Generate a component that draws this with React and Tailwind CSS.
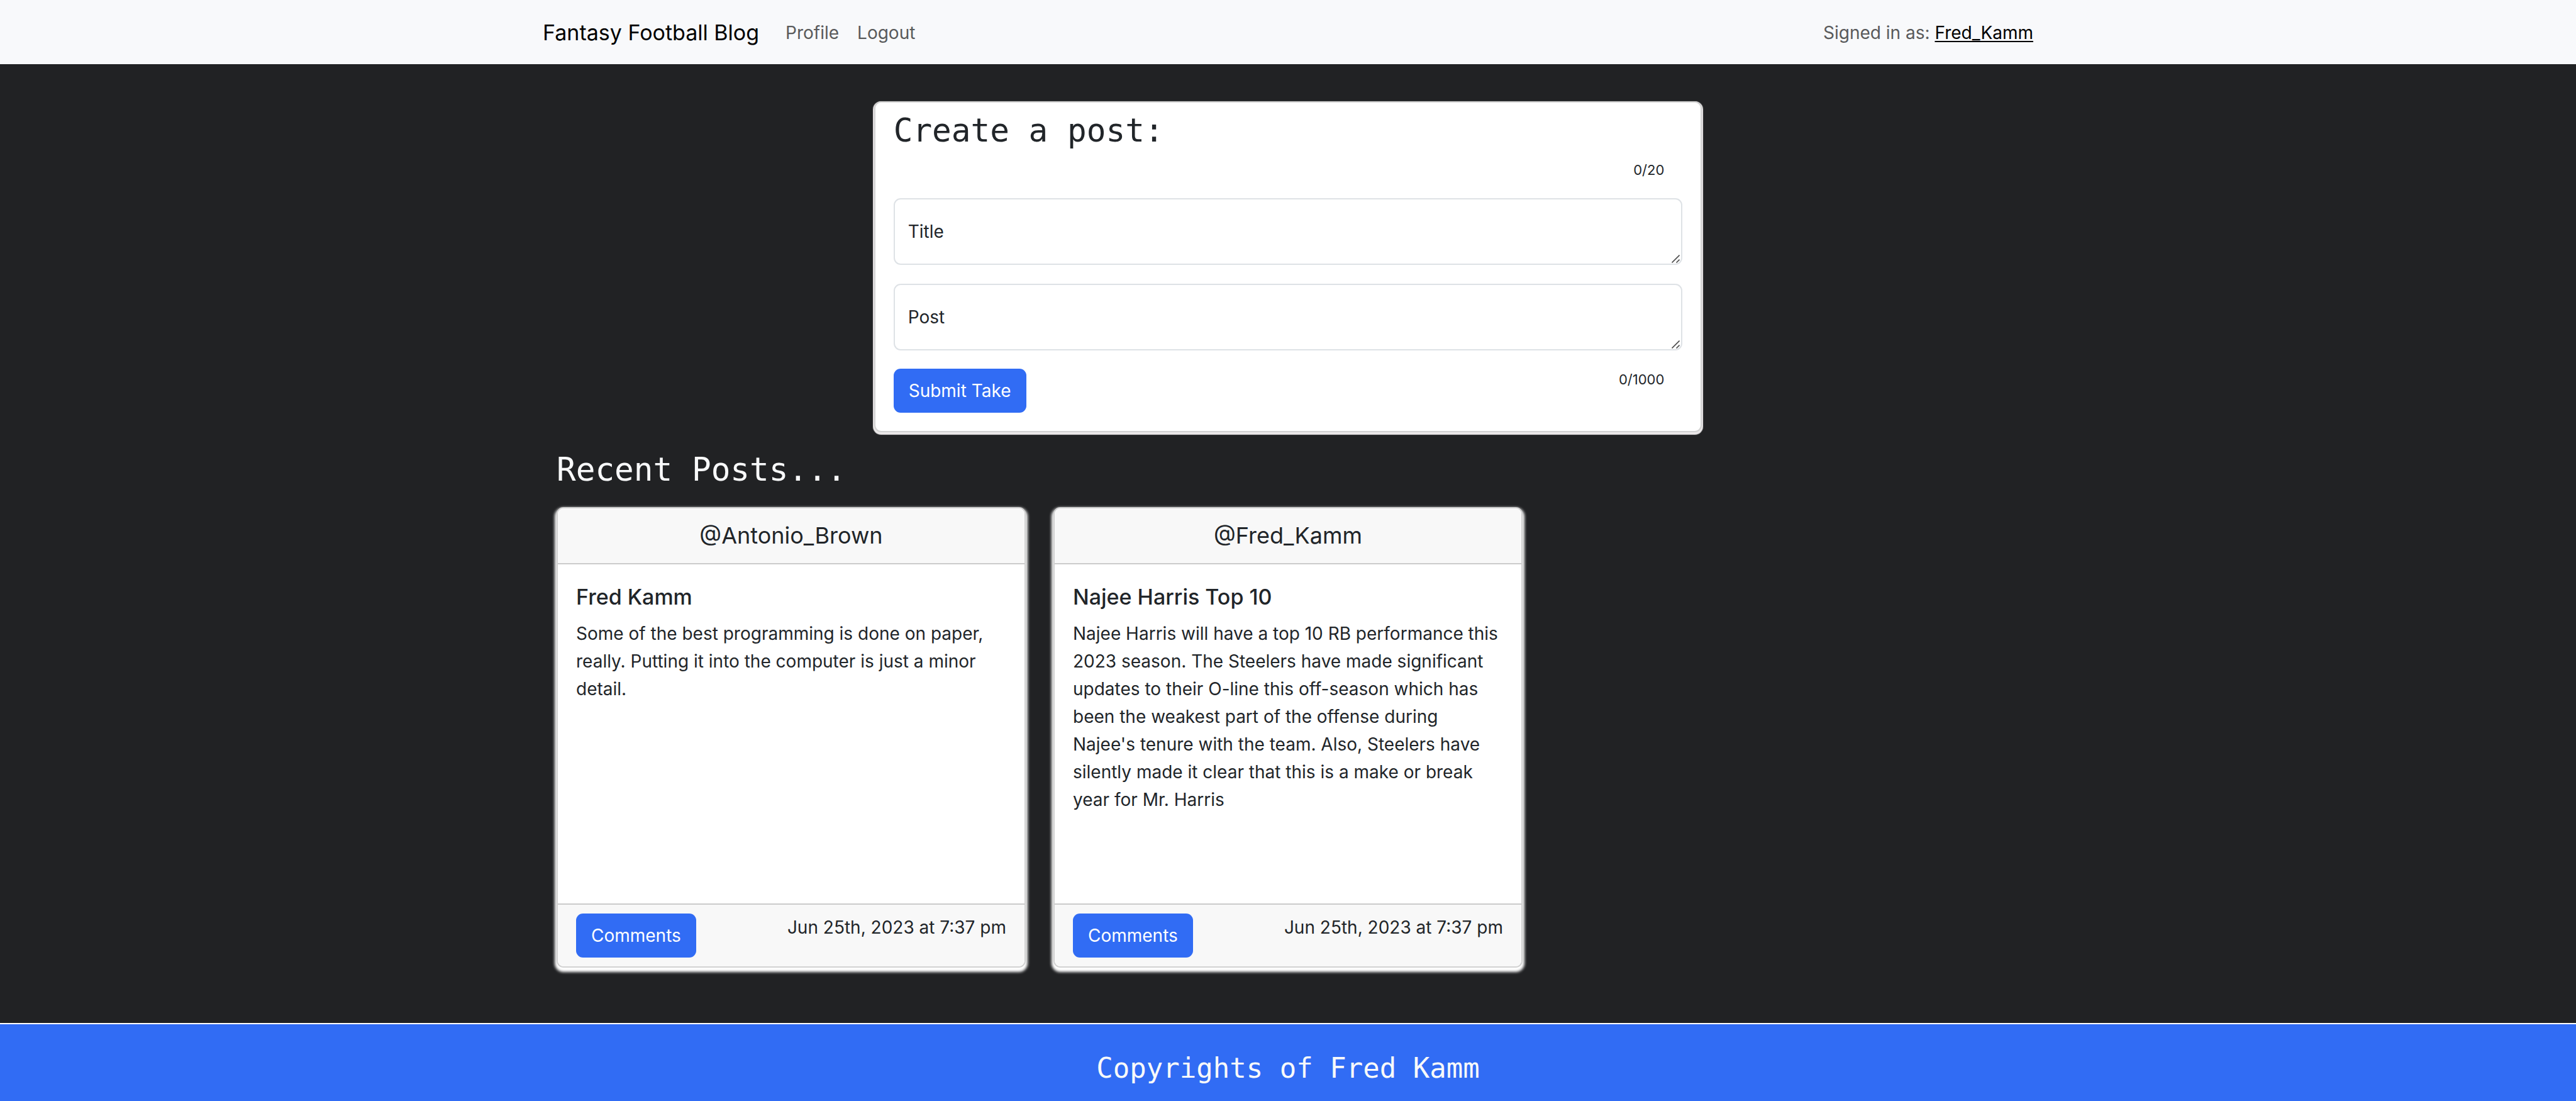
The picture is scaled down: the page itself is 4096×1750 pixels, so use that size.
import React, { useState } from "react";

const posts = [
  {
    user: "@Antonio_Brown",
    title: "Fred Kamm",
    body: "Some of the best programming is done on paper, really. Putting it into the computer is just a minor detail.",
    date: "Jun 25th, 2023 at 7:37 pm",
  },
  {
    user: "@Fred_Kamm",
    title: "Najee Harris Top 10",
    body: "Najee Harris will have a top 10 RB performance this 2023 season. The Steelers have made significant updates to their O-line this off-season which has been the weakest part of the offense during Najee's tenure with the team. Also, Steelers have silently made it clear that this is a make or break year for Mr. Harris",
    date: "Jun 25th, 2023 at 7:37 pm",
  },
];

function Navbar() {
  return (
    <header className="bg-[#f8f9fb]">
      <nav className="mx-auto flex h-[102px] max-w-[2370px] items-center pt-[2px] text-[28px] leading-[44px] text-[#595a5b]">
        <a href="#home" className="text-[34px] leading-[54px] text-black">
          Fantasy Football Blog
        </a>
        <div className="ml-[42px] flex gap-[29px]">
          <a href="#profile">Profile</a>
          <a href="#logout">Logout</a>
        </div>
        <p className="ml-auto">
          Signed in as:{" "}
          <a
            href="#me"
            className="text-black underline decoration-2 underline-offset-[3px] [text-decoration-skip-ink:none]"
          >
            Fred_Kamm
          </a>
        </p>
      </nav>
    </header>
  );
}

function ResizeGrip() {
  return (
    <svg
      viewBox="0 0 13 13"
      className="pointer-events-none absolute right-[4px] bottom-[3px] size-[13px]"
      fill="none"
      stroke="#4d4d4d"
      strokeWidth="1.6"
      aria-hidden="true"
    >
      <path d="M0.5 12.5 12.5 0.5M7.5 12.5l5-5" />
    </svg>
  );
}

function FloatingField({ id, label, value, onChange, maxLength }) {
  return (
    <div className="relative">
      <textarea
        id={id}
        value={value}
        maxLength={maxLength}
        onChange={(e) => onChange(e.target.value)}
        className="block h-[106px] w-full resize-none rounded-[11px] border-2 border-[#dee2e6] bg-white px-[21px] pt-[42px] outline-none"
      />
      {value === "" && (
        <label
          htmlFor={id}
          className="pointer-events-none absolute inset-0 flex items-center pl-[23px]"
        >
          {label}
        </label>
      )}
      <ResizeGrip />
    </div>
  );
}

function Button({ children, type = "button" }) {
  return (
    <button
      type={type}
      className="rounded-[11px] bg-[#316cf4] px-6 py-[13px] text-[28px] leading-[44px] text-white"
    >
      {children}
    </button>
  );
}

function CreatePost() {
  const [title, setTitle] = useState("");
  const [post, setPost] = useState("");
  return (
    <form
      onSubmit={(e) => e.preventDefault()}
      className="mx-auto w-5/9 rounded-[11px] border-2 border-[#d2d2d2] bg-white px-[29px] pt-[14px] pb-[29px] shadow-[0_2px_1px_2px_#ebe8e9]"
    >
      <h3 className="font-['DejaVu_Sans_Mono',monospace] text-[51px] leading-[62px]">
        Create a post:
      </h3>
      <p className="mt-[14px] pr-[29px] text-right text-[22px] leading-[34px]">
        {title.length}/20
      </p>
      <div className="mt-[28px] flex flex-col gap-[30px]">
        <FloatingField id="title" label="Title" value={title} onChange={setTitle} maxLength={20} />
        <FloatingField id="post" label="Post" value={post} onChange={setPost} maxLength={1000} />
      </div>
      <div className="mt-[29px] flex items-start justify-between">
        <Button type="submit">Submit Take</Button>
        <p className="pr-[29px] text-[22px] leading-[34px]">{post.length}/1000</p>
      </div>
    </form>
  );
}

function PostCard({ user, title, body, date }) {
  return (
    <article className="mx-[22px] flex min-h-[732px] flex-col overflow-hidden rounded-[11px] border-2 border-[#d2d2d2] bg-white shadow-[0_4px_4px_3px_#ffffff]">
      <h4 className="border-b-2 border-[#cbcbcb] bg-[#f8f8f8] px-[29px] py-4 text-center text-[36px] leading-[55px]">
        {user}
      </h4>
      <div className="flex-1 px-[29px] pt-[30px] pb-[29px]">
        <h5 className="text-[34px] leading-[44px] font-medium">{title}</h5>
        <p className="mt-[14px]">{body}</p>
      </div>
      <div className="flex items-start justify-between border-t-2 border-[#cbcbcb] bg-[#f8f8f8] px-[29px] py-[14px]">
        <Button>Comments</Button>
        <p>{date}</p>
      </div>
    </article>
  );
}

export default function App() {
  return (
    <div className="flex min-h-screen flex-col bg-[#212224] font-[Inter,'Liberation_Sans',sans-serif] text-[28px] leading-[44px] text-[#212529]">
      <Navbar />
      <main className="mx-auto w-full max-w-[2370px] flex-1 pt-[59px] pb-[59px]">
        <CreatePost />
        <h3 className="mt-[29px] pl-[22px] font-['DejaVu_Sans_Mono',monospace] text-[51px] leading-[62px] text-[#f8f9fa]">
          Recent Posts...
        </h3>
        <section className="mt-[28px] grid grid-cols-3">
          {posts.map((post) => (
            <PostCard key={post.title} {...post} />
          ))}
        </section>
      </main>
      <footer className="border-t-2 border-white bg-[#316cf4] pt-[43px] pb-[25px] text-center">
        <h4 className="font-['DejaVu_Sans_Mono',monospace] text-[44px] leading-[54px] text-[#f8f9fa]">
          Copyrights of Fred Kamm
        </h4>
      </footer>
    </div>
  );
}
